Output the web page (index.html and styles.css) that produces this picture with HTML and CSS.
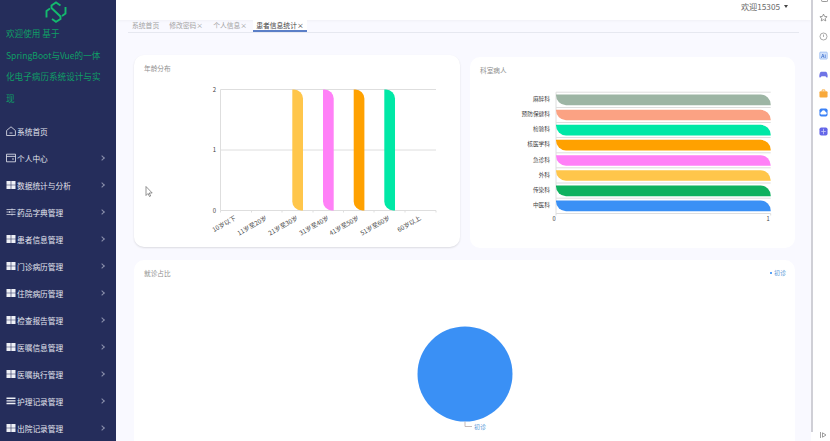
FILE: index.html
```html
<!DOCTYPE html>
<html lang="zh-CN">
<head>
<meta charset="utf-8">
<title>患者信息统计</title>
<link rel="stylesheet" href="styles.css">
</head>
<body>
<div class="app">
  <aside class="sidebar">
    <svg class="logo" viewBox="0 0 24 22" width="24" height="22">
      <g fill="none" stroke="#14b96e" stroke-width="1.900">
        <path d="M16.500 4.500 12 1.500 7.500 4.500v2.500l9 8.500v2.500L12 20.800 8 18"/>
        <path d="M2.500 16.500V10L6 7.500"/>
        <path d="M21.500 6V12.500L18 15"/>
      </g>
    </svg>
    <h1 class="site-title">欢迎使用 基于<br>SpringBoot与Vue的一体<br>化电子病历系统设计与实<br>现</h1>
    <nav class="menu">
      <a class="item"><svg class="ico" viewBox="0 0 10 10"><path d="M.6 4.500 5 .8l4.400 3.700v5H.6zM3.500 7h3" fill="none" stroke="#e8eaf2" stroke-width=".8"/></svg><span>系统首页</span></a>
      <a class="item"><svg class="ico" viewBox="0 0 10 10"><path d="M.5 1.200h9v7.600h-9zM.5 3.400h9M6 6h2" fill="none" stroke="#e8eaf2" stroke-width=".8"/></svg><span>个人中心</span><i class="chev"></i></a>
      <a class="item"><svg class="ico" viewBox="0 0 10 10"><path d="M.5 1h4.200v3.700H.5zM5.300 1h4.200v3.700H5.300zM.5 5.300h4.200V9H.5zM5.300 5.300h4.200V9H5.300z" fill="#eef0f6"/></svg><span>数据统计与分析</span><i class="chev"></i></a>
      <a class="item"><svg class="ico" viewBox="0 0 10 10"><path d="M.5 2.500h9M.5 5h9M.5 7.500h9M6 1.500v2M3.500 4v2M6 6.500v2" fill="none" stroke="#e8eaf2" stroke-width=".7"/></svg><span>药品字典管理</span><i class="chev"></i></a>
      <a class="item"><svg class="ico" viewBox="0 0 10 10"><path d="M.5 1h4.200v3.700H.5zM5.300 1h4.200v3.700H5.300zM.5 5.300h4.200V9H.5zM5.300 5.300h4.200V9H5.300z" fill="#eef0f6"/></svg><span>患者信息管理</span><i class="chev"></i></a>
      <a class="item"><svg class="ico" viewBox="0 0 10 10"><path d="M.5 1h4.200v3.700H.5zM5.300 1h4.200v3.700H5.300zM.5 5.300h4.200V9H.5zM5.300 5.300h4.200V9H5.300z" fill="#eef0f6"/></svg><span>门诊病历管理</span><i class="chev"></i></a>
      <a class="item"><svg class="ico" viewBox="0 0 10 10"><path d="M.5 1h4.200v3.700H.5zM5.300 1h4.200v3.700H5.300zM.5 5.300h4.200V9H.5zM5.300 5.300h4.200V9H5.300z" fill="#eef0f6"/></svg><span>住院病历管理</span><i class="chev"></i></a>
      <a class="item"><svg class="ico" viewBox="0 0 10 10"><path d="M.5 1h4.200v3.700H.5zM5.300 1h4.200v3.700H5.300zM.5 5.300h4.200V9H.5zM5.300 5.300h4.200V9H5.300z" fill="#eef0f6"/></svg><span>检查报告管理</span><i class="chev"></i></a>
      <a class="item"><svg class="ico" viewBox="0 0 10 10"><path d="M.5 1h4.200v3.700H.5zM5.300 1h4.200v3.700H5.300zM.5 5.300h4.200V9H.5zM5.300 5.300h4.200V9H5.300z" fill="#eef0f6"/></svg><span>医嘱信息管理</span><i class="chev"></i></a>
      <a class="item"><svg class="ico" viewBox="0 0 10 10"><path d="M.5 1h4.200v3.700H.5zM5.300 1h4.200v3.700H5.300zM.5 5.300h4.200V9H.5zM5.300 5.300h4.200V9H5.300z" fill="#eef0f6"/></svg><span>医嘱执行管理</span><i class="chev"></i></a>
      <a class="item"><svg class="ico" viewBox="0 0 10 10"><path d="M.5 1.500h9v1.600h-9zM.5 4.300h9v1.200h-9zM.5 6.700h9v1.600h-9z" fill="#eef0f6"/></svg><span>护理记录管理</span><i class="chev"></i></a>
      <a class="item"><svg class="ico" viewBox="0 0 10 10"><path d="M.5 1h4.200v3.700H.5zM5.300 1h4.200v3.700H5.300zM.5 5.300h4.200V9H.5zM5.300 5.300h4.200V9H5.300z" fill="#eef0f6"/></svg><span>出院记录管理</span><i class="chev"></i></a>
    </nav>
  </aside>

  <main class="main">
    <header class="topbar"><span class="user">欢迎15305</span><i class="caret"></i></header>
    <div class="tabs">
      <span class="tab">系统首页</span>
      <span class="tab">修改密码×</span>
      <span class="tab">个人信息×</span>
      <span class="tab active">患者信息统计×</span>
    </div>
    <div class="board">
      <section class="card age">
        <h2>年龄分布</h2>
        <svg class="chart" viewBox="0 .5 326 192" width="326" height="192">
          <g class="grid">
            <path d="M86.500 35H302M86.500 95.500H302M86.500 156H302M86.500 35V156M86.500 156v2M117.500 156v2M148 156v2M179 156v2M209.500 156v2M240 156v2M271 156v2M302 156v2"/>
          </g>
          <g class="tick">
            <text x="82" y="37" text-anchor="end">2</text>
            <text x="82" y="97.500" text-anchor="end">1</text>
            <text x="82" y="158" text-anchor="end">0</text>
          </g>
          <path fill="#ffc64b" d="M158.300 35h1.700a9 9 0 0 1 9 9V156h-1.700a9 9 0 0 1-9-9z"/>
          <path fill="#ff80f7" d="M189 35h1.700a9 9 0 0 1 9 9V156h-1.700a9 9 0 0 1-9-9z"/>
          <path fill="#ffa100" d="M219.700 35h1.700a9 9 0 0 1 9 9V156h-1.700a9 9 0 0 1-9-9z"/>
          <path fill="#00e8a6" d="M250.300 35h1.700a9 9 0 0 1 9 9V156h-1.700a9 9 0 0 1-9-9z"/>
          <g class="tick xlabels">
            <text transform="translate(100 160.500) rotate(-30)" text-anchor="end" y="5">10岁以下</text>
            <text transform="translate(131 160.500) rotate(-30)" text-anchor="end" y="5">11岁至20岁</text>
            <text transform="translate(162 160.500) rotate(-30)" text-anchor="end" y="5">21岁至30岁</text>
            <text transform="translate(193 160.500) rotate(-30)" text-anchor="end" y="5">31岁至40岁</text>
            <text transform="translate(223 160.500) rotate(-30)" text-anchor="end" y="5">41岁至50岁</text>
            <text transform="translate(254 160.500) rotate(-30)" text-anchor="end" y="5">51岁至60岁</text>
            <text transform="translate(285 160.500) rotate(-30)" text-anchor="end" y="5">60岁以上</text>
          </g>
          <path class="cursor" d="M12 132v9l2-2 1.500 3 1.200-.6-1.500-2.900h3z"/>
        </svg>
      </section>
      <section class="card dept">
        <h2>科室病人</h2>
        <svg class="chart" viewBox="0 .5 325 191" width="325" height="191">
          <path class="gridline" d="M86 35.700H300.700M86 51H300.700M86 66H300.700M86 81H300.700M86 96.300H300.700M86 111.300H300.700M86 126.500H300.700M86 141.700H300.700M86 157H300.700M86 35.700V157M300.700 157v2M86 157v2"/>
          <path fill="#9db5a4" d="M86 38h204.700a10 10 0 0 1 10 10v.7H96a10 10 0 0 1-10-10z"/>
          <path fill="#fba283" d="M86 53.300h204.700a10 10 0 0 1 10 10v.4H96a10 10 0 0 1-10-10z"/>
          <path fill="#00e8a6" d="M86 68.300h204.700a10 10 0 0 1 10 10v.7H96a10 10 0 0 1-10-10z"/>
          <path fill="#ffa100" d="M86 83.300h204.700a10 10 0 0 1 10 10v.7H96a10 10 0 0 1-10-10z"/>
          <path fill="#ff80f7" d="M86 98.700h204.700a10 10 0 0 1 10 10v.6H96a10 10 0 0 1-10-10z"/>
          <path fill="#ffc64b" d="M86 113.700h204.700a10 10 0 0 1 10 10v.6H96a10 10 0 0 1-10-10z"/>
          <path fill="#0fb15f" d="M86 129h204.700a10 10 0 0 1 10 10v.7H96a10 10 0 0 1-10-10z"/>
          <path fill="#3a90f5" d="M86 144h204.700a10 10 0 0 1 10 10v.7H96a10 10 0 0 1-10-10z"/>
          <g class="tick ylabels">
            <text x="80" y="44.400" text-anchor="end">麻醉科</text>
            <text x="80" y="59.500" text-anchor="end">预防保健科</text>
            <text x="80" y="74.700" text-anchor="end">检验科</text>
            <text x="80" y="89.900" text-anchor="end">核医学科</text>
            <text x="80" y="105" text-anchor="end">急诊科</text>
            <text x="80" y="120.200" text-anchor="end">外科</text>
            <text x="80" y="135.300" text-anchor="end">传染科</text>
            <text x="80" y="150.500" text-anchor="end">中医科</text>
            <text x="84" y="164" text-anchor="middle">0</text>
            <text x="298" y="164" text-anchor="middle">1</text>
          </g>
        </svg>
      </section>
      <section class="card ratio">
        <div class="ratio-head">
          <h2>就诊占比</h2>
          <span class="legend"><i class="dot"></i>初诊</span>
        </div>
        <svg class="pie" viewBox="0 0 661 182" width="661" height="182">
          <circle cx="331" cy="106" r="47.500" fill="#3a90f5"/>
          <path d="M331 153.500v5h7" fill="none" stroke="#b8a9a9" stroke-width=".8"/>
          <text x="340" y="160.500" class="pie-label">初诊</text>
        </svg>
      </section>
    </div>
  </main>

  <div class="scrollbar"></div>

  <aside class="browser-rail">
    <i class="rail-top"></i>
    <svg class="rail-ico" viewBox="0 0 10 10"><path d="M5 1.200 6.200 3.800 9 4.100 6.900 6l.6 2.800L5 7.400 2.500 8.800 3.100 6 1 4.100l2.800-.3z" fill="none" stroke="#777" stroke-width=".8"/></svg>
    <svg class="rail-ico" viewBox="0 0 10 10"><circle cx="5" cy="5" r="3.900" fill="none" stroke="#888" stroke-width=".8"/><path d="M5 2.800V5.500" fill="none" stroke="#888" stroke-width=".8"/></svg>
    <svg class="rail-ico" viewBox="0 0 10 10"><rect x=".8" y="1.200" width="8.400" height="7.800" rx="1" fill="#d4e3fb" stroke="#7ba6ec" stroke-width=".6"/><text x="5" y="7.300" class="ai" text-anchor="middle">Ai</text></svg>
    <svg class="rail-ico" viewBox="0 0 10 10"><path d="M2.500 2h5C9 2 10 6 9.500 8c-.3.800-1.500.5-2.300-1H2.800C2 8.500.8 8.800.5 8 0 6 1 2 2.500 2z" fill="#6f74e6"/></svg>
    <svg class="rail-ico" viewBox="0 0 10 10"><rect x=".5" y="2.500" width="9" height="7" rx="1.200" fill="#f8a93b"/><path d="M3.500 2.500V1h3v1.500" fill="none" stroke="#f8a93b"/></svg>
    <svg class="rail-ico" viewBox="0 0 10 10"><rect x=".5" y=".5" width="9" height="9" rx="2" fill="#3c82f6"/><path d="M2.200 7.200a1.500 1.500 0 0 1 .4-2.800 2.500 2.500 0 0 1 4.800 0 1.500 1.500 0 0 1 .4 2.800z" fill="#fff"/></svg>
    <svg class="rail-ico" viewBox="0 0 10 10"><rect x=".5" y=".5" width="9" height="9" rx="2" fill="#6466e8"/><path d="M5 2v6M2.500 5h5" stroke="#c9caf8" stroke-width=".9"/></svg>
    <svg class="rail-end" viewBox="0 0 7 6" width="7" height="6"><path d="M.5 0v6M2.500 .8 6 3 2.500 5.200z" fill="none" stroke="#777" stroke-width=".7"/></svg>
  </aside>
</div>
</body>
</html>
```

FILE: styles.css
```css
* { box-sizing: border-box; margin: 0; padding: 0; }
html, body { width: 830px; height: 441px; overflow: hidden; background: #fff; }
body { font-family: "Noto Sans CJK SC", "Liberation Sans", sans-serif; }

.app { display: flex; width: 830px; height: 441px; overflow: hidden; filter: blur(.3px); }

/* left navigation */
.sidebar { flex: 0 0 116px; height: 441px; background: #252d5b; overflow: hidden; }
.logo { display: block; margin: 1px 0 0 44px; }
.site-title { margin: 0; padding: 0 0 0 6px; font-size: 8.6px; font-weight: 400; line-height: 21.5px; color: #0f9f66; white-space: nowrap; }
.menu { display: flex; flex-direction: column; margin-top: 8.5px; }
.item { display: flex; align-items: center; height: 27px; padding-left: 6px; color: #e4e6ef; font-size: 7.7px; }
.ico { width: 10px; height: 10px; flex: none; margin-right: 1px; }
.item span { flex: 1; }
.chev { width: 4px; height: 4px; margin-right: 12px; border-top: 1px solid #8b90ac; border-right: 1px solid #8b90ac; transform: rotate(45deg); }

/* main column */
.main { flex: 0 0 695px; height: 441px; display: flex; flex-direction: column; background: #f9f9ff; overflow: hidden; }
.topbar { flex: 0 0 20px; display: flex; align-items: center; justify-content: flex-end; padding: 0 23px 8px 0; background: #fff; box-shadow: 0 1px 3px rgba(0,0,0,.04); color: #666; font-size: 8.2px; }
.caret { width: 0; height: 0; margin-left: 4px; border: 2.500px solid transparent; border-top: 3px solid #444; border-bottom: 0; }
.tabs { flex: 0 0 12px; display: flex; margin: 0 12px; padding-left: 4px; border-bottom: 1px solid #e6e8f0; font-size: 6.800px; line-height: 11px; color: #a3a3a3; }
.tab { margin-right: 10px; white-space: nowrap; }
.tab.active { margin: 0 0 0 -4px; padding: 0 3px; color: #444; background: #fff; border-bottom: 2px solid #5b7fc7; height: 12px; }

.board { display: grid; grid-template-columns: 326px 325px; column-gap: 10px; padding: 22px 0 0 18px; row-gap: 12px; align-items: start; }
.card { background: #fff; border-radius: 10px; overflow: hidden; position: relative; }
.card h2 { position: absolute; left: 10px; top: 9px; font-size: 6.700px; font-weight: 400; line-height: 9px; color: #8f8f8f; }
.age { height: 192px; box-shadow: 0 1px 2px rgba(0,0,0,.12); }
.dept { height: 191px; margin-top: 2px; }
.ratio { grid-column: 1 / 3; width: 661px; height: 190px; }
.chart { display: block; }

.grid path, .gridline { fill: none; stroke: #dedede; stroke-width: 1; }
.tick text { font-size: 6px; fill: #444; font-family: "Noto Sans CJK SC", "Liberation Sans", sans-serif; }
.tick.xlabels text { font-size: 6.300px; }
.tick.ylabels text { font-size: 5.700px; }
.cursor { fill: #fff; stroke: #666; stroke-width: .7; }

.ratio-head { height: 8px; }
.legend { position: absolute; right: 9px; top: 9px; font-size: 6px; line-height: 8px; color: #5b9bd9; display: flex; align-items: center; }
.dot { width: 1.500px; height: 1.500px; margin-right: 2px; border-radius: 50%; background: #3a90f5; }
.pie { display: block; }
.pie-label { font-size: 6px; fill: #5b9bd9; }

/* scrollbar + browser side rail */
.scrollbar { flex: 0 0 2px; height: 432px; background: #cfcfd6; }
.browser-rail { flex: 1; display: flex; flex-direction: column; align-items: center; padding: 12.500px 0 0 4px; gap: 10px; background: #fff; position: relative; }
.rail-ico { width: 9px; height: 9px; flex: none; }
.rail-top { position: absolute; left: 8px; top: 0; width: 7px; height: 2px; border: 1px solid #999; border-top: 0; border-radius: 0 0 2px 2px; }
.ai { font-size: 5.500px; fill: #3c6fd0; font-family: "Liberation Sans", sans-serif; font-weight: 700; }
.rail-end { position: absolute; left: 7px; bottom: 3px; }
```
